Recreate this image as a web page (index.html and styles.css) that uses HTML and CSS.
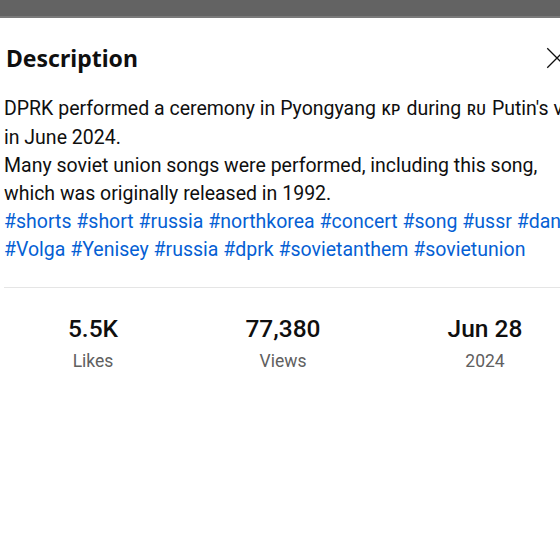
FILE: index.html
```html
<!DOCTYPE html>
<html>
<head>
<meta charset="utf-8">
<link rel="stylesheet" href="styles.css">
</head>
<body>
<div class="topbar"></div>
<div class="panel">
  <header class="head">
    <h2 class="title">Description</h2>
    <button class="close" aria-label="Close">
      <svg viewBox="0 0 24 24" width="26" height="26"><path d="M3 3 L21 21 M21 3 L3 21" stroke="#0f0f0f" stroke-width="1.2" fill="none"/></svg>
    </button>
  </header>
  <div class="desc">
    <p>DPRK performed a ceremony in Pyongyang <span class="flag">KP</span> during <span class="flag">RU</span> Putin's visit</p>
    <p>in June 2024.</p>
    <p>Many soviet union songs were performed, including this song,</p>
    <p>which was originally released in 1992.</p>
    <p class="tags"><a>#shorts</a> <a>#short</a> <a>#russia</a> <a>#northkorea</a> <a>#concert</a> <a>#song</a> <a>#ussr</a> <a>#dance</a></p>
    <p class="tags"><a>#Volga</a> <a>#Yenisey</a> <a>#russia</a> <a>#dprk</a> <a>#sovietanthem</a> <a>#sovietunion</a></p>
  </div>
  <div class="stats">
    <div class="stat"><div class="num">5.5K</div><div class="label">Likes</div></div>
    <div class="stat"><div class="num">77,380</div><div class="label">Views</div></div>
    <div class="stat"><div class="num">Jun 28</div><div class="label">2024</div></div>
  </div>
</div>
</body>
</html>
```
FILE: styles.css
```css
html, body {
  margin: 0;
  padding: 0;
  background: #ffffff;
  overflow: hidden;
}
body {
  width: 600px;
  font-family: Roboto, "Liberation Sans", sans-serif;
  color: #0f0f0f;
}
.topbar {
  height: 16px;
  background: #636363;
  border-bottom: 2px solid #7a7a7a;
}
.panel {
  padding: 0 0 0 4px;
}
.head {
  display: flex;
  align-items: center;
  justify-content: space-between;
  height: 77px;
}
.title {
  margin: 3px 0 0 2px;
  font-family: "Noto Sans", sans-serif;
  font-weight: 700;
  font-size: 23px;
  line-height: 30px;
  color: #0f0f0f;
}
.close {
  border: 0;
  background: none;
  padding: 0;
  margin: 3px 30px 0 0;
  width: 26px;
  height: 26px;
}
.desc {
  font-size: 19.5px;
  line-height: 28px;
  white-space: nowrap;
  padding-bottom: 23px;
  border-bottom: 1px solid #e5e5e5;
}
.desc p { margin: 0; }
.flag {
  font-size: 14px;
  font-weight: 500;
  letter-spacing: 0.5px;
  margin: 0 1px;
}
.tags a {
  color: #065fd4;
  text-decoration: none;
}
.stats {
  display: grid;
  grid-template-columns: 178px 202px 202px;
  padding-top: 26px;
  text-align: center;
}
.num {
  font-size: 24.5px;
  font-weight: 500;
  line-height: 30px;
}
.label {
  margin-top: 4px;
  font-size: 17.5px;
  line-height: 26px;
  color: #606060;
}
```
